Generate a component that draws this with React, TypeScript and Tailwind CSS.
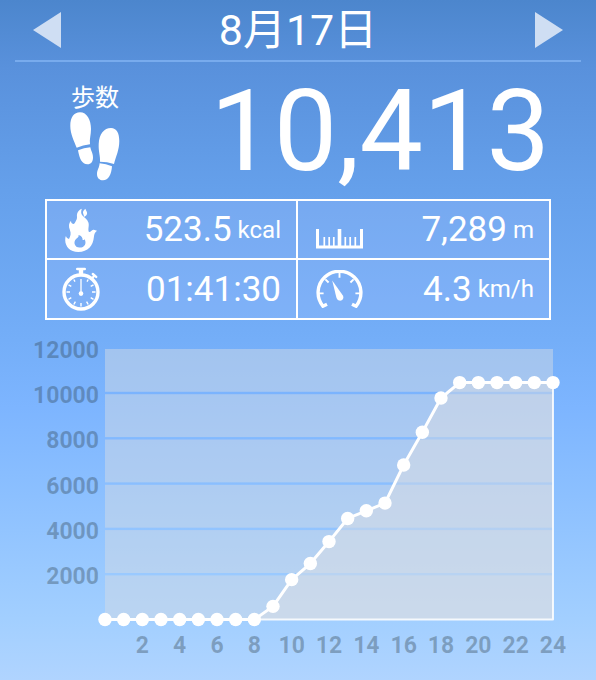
import type { ReactNode } from "react";

const HOURLY_STEPS = [
  0, 0, 0, 0, 0, 0, 0, 0, 0, 580, 1760, 2470, 3440, 4460, 4800, 5140, 6820,
  8265, 9780, 10460, 10460, 10460, 10460, 10460, 10460,
];
const STEP_TICKS = [12000, 10000, 8000, 6000, 4000, 2000];
const HOUR_TICKS = [2, 4, 6, 8, 10, 12, 14, 16, 18, 20, 22, 24];

const PLOT = { left: 105, right: 553, top: 29, bottom: 299.5 };

const hourX = (hour: number) =>
  PLOT.left + (hour * (PLOT.right - PLOT.left)) / 24;
const stepsY = (steps: number) => PLOT.bottom - steps * 0.02265;

function FootprintsIcon() {
  return (
    <svg width="50" height="69" viewBox="0 0 50 69" fill="white" aria-hidden="true">
      <path d="M6.7 35.7C4 29 .3 22 .3 14C.3 5 4 .3 10 .3C17 .3 21 8 21 17C21 23 19.3 27 20 32.3Q13 33 6.7 35.7Z" />
      <path d="M8 38.3Q14 35.6 20.3 35.3C21 39 23 41 23 45.5C23 49.5 21 52.3 17.5 52.3C12 52.3 9.5 47 8 38.3Z" />
      <path d="M30 49.7C30.5 44 28.3 40 28.7 32C29.2 22 34 16 41 16C46.5 16 49.3 21 49.3 29C49.3 38 46 44 44 52Q37 49.8 30 49.7Z" />
      <path d="M29.6 51.3Q36 51.6 42 54.2C41.5 62 38.5 68.3 33 68.3C29.5 68.3 27 66 27 62C27 58 29.3 56 29.6 51.3Z" />
    </svg>
  );
}

function FlameIcon() {
  return (
    <svg width="32" height="44" viewBox="0 0 32 44" fill="white" aria-hidden="true">
      <path
        fillRule="evenodd"
        d="M13.3 44C5 44 .2 38.5 .2 32C.2 30.4 .4 29.2 .9 28C1.6 29.7 2.5 30.6 4 31C5.5 28 6.3 25.5 4.9 22C3.5 18.5 3.6 15.5 6 12.8C6 14.8 6.8 15.6 8.2 16C9.6 16 10.3 14 11.6 11.5C12.6 9.5 11.4 7.6 12.2 5.4C12.9 3.4 14.4 1.8 16.8 .8C15.9 3.4 15.8 5.8 17.4 7.6C19.2 9.6 22.4 11.3 23.4 14.4C24.5 17.8 22.6 20.4 23.9 24C25.6 24.4 26.6 22.2 28.2 21.8C29.6 21.5 30.8 22.6 32 22.8C30 24.2 29.2 26.2 28.9 29C28.2 37.6 23 44 13.3 44ZM13.6 27C13.8 29.4 12.6 29.6 11.3 30.7C7.8 34 9.6 39.4 14.5 39.6C19.6 39.7 21.9 35.2 19.6 31.2C19 32 18.2 32.2 17.6 32.1C17.8 29.6 16.6 28 13.6 27Z"
      />
      <path d="M20.5 .8C18.2 2.4 17.5 4.2 18.3 6C18.7 7 19.1 7.8 18.9 9C21.4 7.8 22.6 6 21.9 3.9C21.5 2.9 20.7 2.2 20.5 .8Z" />
    </svg>
  );
}

function StopwatchIcon() {
  return (
    <svg width="40" height="44" viewBox="0 0 40 44" fill="none" stroke="white" aria-hidden="true">
      <circle cx="20" cy="25" r="17" strokeWidth="3.4" />
      <path d="M16.2 2H23.8" strokeWidth="2.4" strokeLinecap="round" />
      <path d="M20 2V8" strokeWidth="4.4" />
      <path d="M30.5 12L33.5 8.6" strokeWidth="2.2" />
      <path d="M31.8 7L35.2 9.9" strokeWidth="2.4" strokeLinecap="round" />
      <path
        d="M34.5 25H31M5.5 25H9M20 39.5V36M12.8 37.5L14.4 34.7M27.2 37.5L25.6 34.7M7.5 32.3L10.3 30.7M32.5 32.3L29.7 30.7M7.5 17.8L10.3 19.4M32.5 17.8L29.7 19.4M12.8 12.5L14 14.6M27.2 12.5L26 14.6"
        strokeWidth="1.4"
      />
      <path d="M20 12V25" strokeWidth="1.3" />
      <circle cx="20" cy="26.6" r="2.3" fill="white" stroke="none" />
    </svg>
  );
}

function RulerIcon() {
  return (
    <svg width="47" height="40" viewBox="0 0 47 40" fill="none" stroke="white" aria-hidden="true">
      <path d="M1.5 19V37H45.5V19" strokeWidth="3" />
      <path d="M23.5 19V37" strokeWidth="3.6" />
      <path d="M8.3 27V37M13.2 27V37M17.8 27V37M29.3 27V37M34.2 27V37M39.3 27V37" strokeWidth="1.7" />
    </svg>
  );
}

function GaugeIcon() {
  return (
    <svg width="47" height="38" viewBox="0 0 47 38" fill="none" stroke="white" aria-hidden="true">
      <path d="M11 34.2L6.9 36.2A21.4 21.4 0 1 1 40.1 36.2L36 34.2" strokeWidth="3.4" />
      <path d="M3 23.4H7.6M44 23.4H39.4M23.5 3V7.8M9.4 9.3L12.6 12.5M37.6 9.3L34.4 12.5" strokeWidth="1.9" />
      <path d="M16.2 10.6L26.9 25.6C28.6 29 25.4 31.8 22.4 30.2C21.2 29.5 20.8 28.6 20.4 27.4Z" fill="white" stroke="none" />
    </svg>
  );
}

function Stat({
  label,
  icon,
  value,
  unit,
  className,
}: {
  label: string;
  icon: ReactNode;
  value: string;
  unit?: string;
  className: string;
}) {
  return (
    <div className={`box-content flex items-center justify-between bg-[#a9c4ff]/25 pr-[15px] ${className}`}>
      <dt aria-label={label} className="flex min-w-10 justify-center">
        {icon}
      </dt>
      <dd className="flex items-center gap-1.5 leading-none">
        <span className="text-[35px]">{value}</span>
        {unit && <span className="text-2xl leading-none">{unit}</span>}
      </dd>
    </div>
  );
}

function StepsChart() {
  const line = HOURLY_STEPS.map((steps, hour) => `${hourX(hour)},${stepsY(steps)}`).join(" ");
  const area = `${line} ${PLOT.right},${PLOT.bottom} ${PLOT.left},${PLOT.bottom}`;

  return (
    <svg viewBox="0 0 596 350" className="block w-full" role="img" aria-label="歩数グラフ">
      {/* bands between the grid lines, the page shows through the gaps */}
      {STEP_TICKS.map((tick) => {
        const top = tick === 12000 ? PLOT.top : stepsY(tick) + 1.2;
        const bottom = tick === 2000 ? PLOT.bottom : stepsY(tick - 2000) - 1.2;
        return (
          <rect
            key={tick}
            x={PLOT.left}
            y={top}
            width={PLOT.right - PLOT.left}
            height={bottom - top}
            fill="#d6dce3"
            fillOpacity="0.48"
          />
        );
      })}
      <polygon points={area} fill="#e0dfe1" fillOpacity="0.44" />
      <path
        d={`M${hourX(8)} ${PLOT.bottom}H${PLOT.right}V${stepsY(10460)}`}
        fill="none"
        stroke="white"
        strokeOpacity="0.85"
        strokeWidth="2"
        strokeLinejoin="round"
      />
      <polyline points={line} fill="none" stroke="white" strokeWidth="3" strokeLinejoin="round" />
      {HOURLY_STEPS.map((steps, hour) => (
        <circle key={hour} cx={hourX(hour)} cy={stepsY(steps)} r="6.7" fill="white" />
      ))}
      <g className="text-[23px] font-bold" fill="#2a3c46" fillOpacity="0.34">
        {STEP_TICKS.map((tick) => (
          <text key={tick} x="99" y={stepsY(tick) + 10} textAnchor="end">
            {tick}
          </text>
        ))}
        {HOUR_TICKS.map((hour) => (
          <text key={hour} x={hourX(hour)} y="333" textAnchor="middle">
            {hour}
          </text>
        ))}
      </g>
    </svg>
  );
}

export default function App() {
  return (
    <main className="min-h-screen bg-[linear-gradient(#4c86cd_0%,#5991dc_10%,#65a0eb_28%,#74aef8_50%,#7db5ff_60%,#8cc0ff_73%,#a2cfff_91%,#b0d4ff_100%)] font-[Roboto,'Noto_Sans_CJK_JP',sans-serif] text-white">
      <header className="mx-[15px] flex h-[62px] items-center justify-between border-b-2 border-[#78abed] px-[18px]">
        <button type="button" aria-label="前の日">
          <svg width="28" height="36" viewBox="0 0 28 36" fill="#cfdef3" aria-hidden="true">
            <path d="M0 18L28 0V36Z" />
          </svg>
        </button>
        <h1 className="text-[43px] leading-none">8月17日</h1>
        <button type="button" aria-label="次の日">
          <svg width="28" height="36" viewBox="0 0 28 36" fill="#cfdef3" aria-hidden="true">
            <path d="M28 18L0 0V36Z" />
          </svg>
        </button>
      </header>

      <section className="flex h-[137px] items-center justify-between pr-[46px] pl-[70px]">
        <div className="flex flex-col items-center gap-0.5 pt-1.5">
          <h2 className="text-2xl leading-6">歩数</h2>
          <FootprintsIcon />
        </div>
        <p className="pt-0.5 text-[113px] leading-none">10,413</p>
      </section>

      <dl className="mx-[45px] grid grid-cols-2 border-2 border-white">
        <Stat
          label="消費カロリー"
          icon={<FlameIcon />}
          value="523.5"
          unit="kcal"
          className="h-[57px] border-r-2 border-b-2 pl-[14px]"
        />
        <Stat
          label="距離"
          icon={<RulerIcon />}
          value="7,289"
          unit="m"
          className="h-[57px] border-b-2 pl-[18px]"
        />
        <Stat
          label="歩行時間"
          icon={<StopwatchIcon />}
          value="01:41:30"
          className="h-[58px] border-r-2 pl-[14px]"
        />
        <Stat
          label="速度"
          icon={<GaugeIcon />}
          value="4.3"
          unit="km/h"
          className="h-[58px] pl-[18px]"
        />
      </dl>

      <StepsChart />
    </main>
  );
}
